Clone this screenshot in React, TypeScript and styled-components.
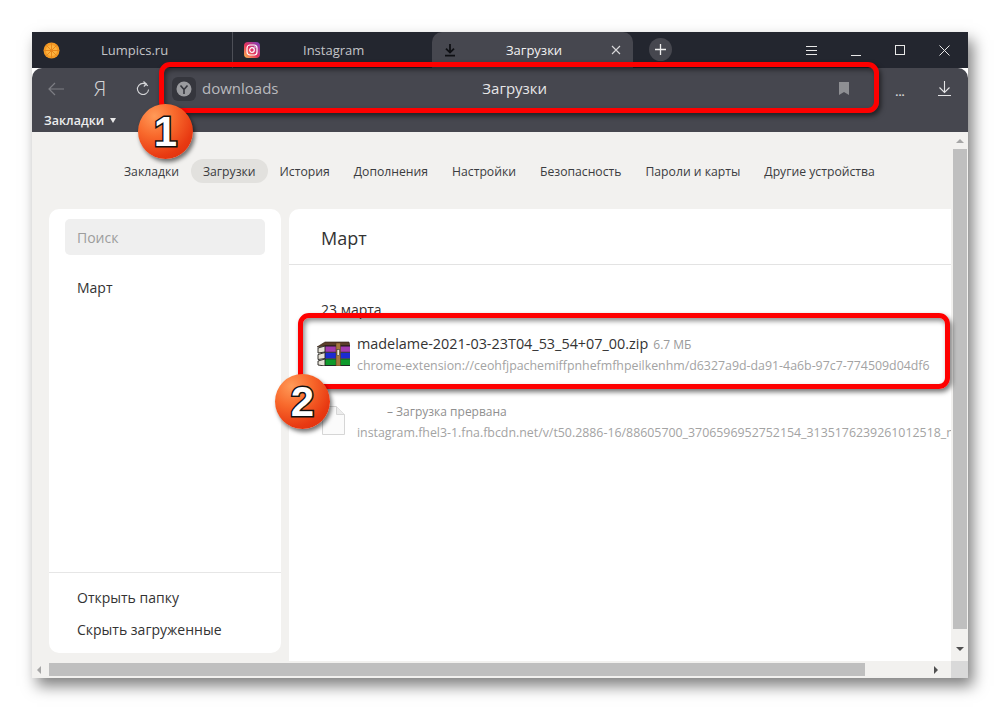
import React from "react";
import styled, {createGlobalStyle} from "styled-components";

const GlobalStyle = createGlobalStyle`
  html, body {
    margin: 0;
    background: #ffffff;
    font-family: "Open Sans", "Noto Sans CJK SC", sans-serif;
  }
`;

const Page = styled.div`
  width: 1000px;
  height: 710px;
  padding: 32px 0 0 32px;
  box-sizing: border-box;
  overflow: hidden;
`;

const Window = styled.div`
  position: relative;
  width: 936px;
  height: 646px;
  display: flex;
  flex-direction: column;
  box-shadow: 5px 8px 14px rgba(0, 0, 0, 0.5);
`;

const TabBar = styled.div`
  height: 36px;
  background: #23262f;
  display: flex;
  align-items: stretch;
  flex: none;
`;

const Tab = styled.div<{ $active?: boolean; $width: number; $divider?: boolean }>`
  width: ${(p) => p.$width}px;
  box-sizing: border-box;
  display: flex;
  align-items: center;
  padding-left: 11px;
  font-size: 13px;
  color: ${(p) => (p.$active ? "#f2f2f2" : "#c3c4c8")};
  background: ${(p) => (p.$active ? "#46474f" : "transparent")};
  border-radius: ${(p) => (p.$active ? "10px 10px 0 0" : "0")};
  border-right: ${(p) => (p.$divider ? "1px solid #4d4f57" : "none")};
`;

const TabTitle = styled.span<{ $left: number }>`
  margin-left: ${(p) => p.$left}px;
  flex: 1;
`;

const NewTab = styled.div`
  width: 23px;
  height: 23px;
  border-radius: 50%;
  background: #46474f;
  margin: 6px 0 0 16px;
  display: flex;
  align-items: center;
  justify-content: center;
`;

const WindowButtons = styled.div`
  margin-left: auto;
  display: flex;
  align-items: center;
  padding-right: 18px;
  gap: 34px;
`;

const Toolbar = styled.div`
  height: 64px;
  flex: none;
  background: #46474f;
  border-radius: 10px 10px 0 0;
  display: flex;
  flex-direction: column;
  z-index: 1;
`;

const NavRow = styled.div`
  height: 41px;
  display: flex;
  align-items: center;
  padding-left: 14px;
`;

const ToolIcon = styled.div<{ $width: number }>`
  width: ${(p) => p.$width}px;
  display: flex;
  justify-content: center;
  flex: none;
`;

const YaLetter = styled.span`
  font-family: "Open Sans", sans-serif;
  font-weight: 300;
  font-size: 21px;
  color: #d4d5d8;
  line-height: 1;
`;

const AddressBar = styled.div`
  flex: none;
  width: 711px;
  height: 36px;
  margin-left: 17px;
  display: flex;
  align-items: center;
  box-sizing: border-box;
  padding-left: 3px;
`;

const SiteBadge = styled.div`
  width: 24px;
  height: 24px;
  border-radius: 6px;
  background: #35363d;
  display: flex;
  align-items: center;
  justify-content: center;
`;

const AddressText = styled.span`
  font-size: 15px;
  color: #b9babe;
  margin: 0 0 2px 6px;
`;

const AddressTitle = styled.span`
  flex: 1;
  text-align: center;
  font-size: 15px;
  color: #e6e6e8;
  margin: 0 88px 2px 0;
`;

const BookmarkFlag = styled.div`
  margin-right: 31px;
  display: flex;
`;

const Dots = styled.span`
  color: #d6d6d8;
  font-size: 11px;
  font-weight: 700;
  line-height: 1;
  width: 40px;
  text-align: center;
  padding-top: 6px;
`;

const BookmarksRow = styled.div`
  height: 23px;
  box-sizing: border-box;
  padding: 4px 0 0 12px;
  display: flex;
  align-items: flex-start;
  gap: 6px;
  color: #ecedee;
  font-size: 12.5px;
  line-height: 16px;
  font-weight: 600;
`;

const Caret = styled.span`
  width: 0;
  height: 0;
  border-left: 3px solid transparent;
  border-right: 3px solid transparent;
  border-top: 5px solid #e8e8e8;
  margin-top: 5px;
`;

const Body = styled.div`
  flex: 1;
  min-height: 0;
  display: grid;
  grid-template-columns: 919px 17px;
  grid-template-rows: 529px 17px;
  background: #f2f1ef;
`;

const Content = styled.div`
  display: flex;
  flex-direction: column;
  overflow: hidden;
  min-width: 0;
`;

const SectionNav = styled.nav`
  height: 77px;
  flex: none;
  box-sizing: border-box;
  padding: 27px 0 0 80px;
  display: flex;
  align-items: flex-start;
`;

const SectionLink = styled.div<{ $active?: boolean }>`
  height: 24px;
  line-height: 26px;
  padding: 0 12px;
  font-size: 12.2px;
  color: #3b3c40;
  border-radius: 12px;
  background: ${(p) => (p.$active ? "#e2e1de" : "transparent")};
`;

const Columns = styled.div`
  flex: 1;
  display: flex;
  min-height: 0;
  padding-left: 17px;
  gap: 8px;
`;

const Sidebar = styled.aside`
  width: 232px;
  height: 444px;
  flex: none;
  background: #ffffff;
  border-radius: 10px;
  display: flex;
  flex-direction: column;
`;

const SearchBox = styled.div`
  margin: 10px 16px 0;
  height: 36px;
  line-height: 37px;
  background: #efefef;
  border-radius: 5px;
  padding-left: 12px;
  font-size: 14px;
  color: #9d9d9d;
`;

const SideMonth = styled.div`
  margin: 23px 0 0 28px;
  font-size: 14px;
  line-height: 20px;
  color: #333;
`;

const SideFooter = styled.div`
  margin-top: auto;
  border-top: 1px solid #e6e6e6;
  height: 81px;
  box-sizing: border-box;
  padding: 15px 0 0 28px;
  display: flex;
  flex-direction: column;
  gap: 12px;
  font-size: 14px;
  line-height: 20px;
  color: #333;
`;

const Main = styled.main`
  flex: 1;
  min-width: 0;
  background: #ffffff;
  border-radius: 10px 0 0 0;
  overflow: hidden;
`;

const MonthHeader = styled.div`
  height: 56px;
  box-sizing: border-box;
  border-bottom: 1px solid #e3e3e3;
  padding: 14px 0 0 32px;
  font-size: 18px;
  line-height: 30px;
  color: #333;
`;

const DateLabel = styled.div`
  margin: 35px 0 0 32px;
  height: 20px;
  font-size: 14px;
  line-height: 20px;
  color: #333;
`;

const DownloadRow = styled.div<{ $top: number }>`
  display: flex;
  margin: ${(p) => p.$top}px 0 0 28px;
  white-space: nowrap;
`;

const FileIcon = styled.div<{ $top: number; $left: number }>`
  width: ${(p) => 40 - p.$left}px;
  flex: none;
  padding: ${(p) => p.$top}px 0 0 ${(p) => p.$left}px;
`;

const FileInfo = styled.div`
  display: flex;
  flex-direction: column;
  gap: 1px;
`;

const FileName = styled.div`
  font-size: 14.4px;
  line-height: 20px;
  color: #333;
`;

const FileSize = styled.span`
  font-size: 12px;
  color: #9a9a9a;
  margin-left: 5px;
`;

const FileStatus = styled.div`
  font-size: 12px;
  line-height: 20px;
  color: #8f8f8f;
  padding-left: 30px;
`;

const FileUrl = styled.div`
  font-size: 12.37px;
  line-height: 20px;
  color: #a3a3a3;
`;

const VScroll = styled.div`
  display: flex;
  flex-direction: column;
  align-items: center;
`;

const VThumb = styled.div`
  width: 14px;
  height: 480px;
  background: #bfbfbf;
  margin: 6px 0 0 0;
`;

const HScroll = styled.div`
  display: flex;
  align-items: center;
`;

const HThumb = styled.div`
  width: 816px;
  height: 13px;
  background: #bfbfbf;
  margin-left: 8px;
`;

const Corner = styled.div`
  background: #d9d9d9;
`;

const Arrow = styled.span<{ $dir: "up" | "down" | "left" | "right"; $light?: boolean }>`
  width: 0;
  height: 0;
  flex: none;
  ${(p) => {
    const color = p.$light ? "#a6a6a6" : "#505050";
    if (p.$dir === "up") return `border-left:4px solid transparent;border-right:4px solid transparent;border-bottom:4px solid ${color};margin-top:7px;`;
    if (p.$dir === "down") return `border-left:4px solid transparent;border-right:4px solid transparent;border-top:4px solid ${color};margin-top:18px;`;
    if (p.$dir === "left") return `border-top:4px solid transparent;border-bottom:4px solid transparent;border-right:4px solid ${color};margin-left:5px;`;
    return `border-top:4px solid transparent;border-bottom:4px solid transparent;border-left:4px solid ${color};margin-left:69px;`;
  }}
`;

const HighlightFrame = styled.div<{ $x: number; $y: number; $w: number; $h: number }>`
  position: absolute;
  left: ${(p) => p.$x}px;
  top: ${(p) => p.$y}px;
  width: ${(p) => p.$w}px;
  height: ${(p) => p.$h}px;
  box-sizing: border-box;
  border: 5px solid #fe0000;
  border-radius: 11px;
  box-shadow: 2px 3px 5px rgba(0, 0, 0, 0.55), inset 2px 3px 5px rgba(0, 0, 0, 0.45);
  z-index: 5;
`;

const StepBadge = styled.div<{ $x: number; $y: number }>`
  position: absolute;
  left: ${(p) => p.$x}px;
  top: ${(p) => p.$y}px;
  width: 55px;
  height: 55px;
  border-radius: 50%;
  background: radial-gradient(circle at 30% 22%, #ff9a58 0%, #f8692c 35%, #e83a12 70%, #d92a0a 100%);
  box-shadow: 2px 3px 4px rgba(0, 0, 0, 0.55);
  display: flex;
  align-items: center;
  justify-content: center;
  font-family: "Liberation Sans", sans-serif;
  font-weight: 700;
  font-size: 42px;
  line-height: 1;
  color: #ffffff;
  -webkit-text-stroke: 3px #111;
  paint-order: stroke fill;
  z-index: 6;
`;

const tabs = ["Закладки", "Загрузки", "История", "Дополнения", "Настройки", "Безопасность", "Пароли и карты", "Другие устройства"];

const OrangeIcon = () => (
    <svg width="17" height="17" viewBox="0 0 17 17">
        <circle cx="8.5" cy="8.5" r="8" fill="#f49a24"/>
        <circle cx="8.5" cy="8.5" r="5.6" fill="#fbb23f"/>
        <path d="M8.5 1v15M1 8.5h15M3.2 3.2l10.6 10.6M13.8 3.2L3.2 13.8" stroke="#e8861a" strokeWidth="1"/>
    </svg>
);

const InstagramIcon = () => (
    <svg width="16" height="16" viewBox="0 0 16 16">
        <defs>
            <linearGradient id="ig" x1="0" y1="1" x2="1" y2="0">
                <stop offset="0" stopColor="#fdc04f"/>
                <stop offset="0.45" stopColor="#e8335c"/>
                <stop offset="1" stopColor="#7440c4"/>
            </linearGradient>
        </defs>
        <rect width="16" height="16" rx="4" fill="url(#ig)"/>
        <rect x="3" y="3" width="10" height="10" rx="3" fill="none" stroke="#fff" strokeWidth="1.2"/>
        <circle cx="8" cy="8" r="2.3" fill="none" stroke="#fff" strokeWidth="1.2"/>
        <circle cx="11" cy="5" r="0.7" fill="#fff"/>
    </svg>
);

const TabDownloadIcon = () => (
    <svg width="14" height="14" viewBox="0 0 14 14" fill="none" stroke="#0f1014" strokeWidth="1.8">
        <path d="M7 1v8M3 5.6L7 9.6l4-4M2 12.7h10"/>
    </svg>
);

const WinRarIcon = () => (
    <svg width="33" height="25" viewBox="0 0 33 25">
        <path d="M0 6L8 1h24l1 4H8z" fill="#5c3f2b" stroke="#2a1c12" strokeWidth="0.6"/>
        <path d="M8 5h25v6H8z" fill="#a23bb0"/>
        <path d="M8 11.5h25v6H8z" fill="#1b2bd2"/>
        <path d="M8 18h25v6.5H8z" fill="#0f9a2c"/>
        <path d="M8 5L1 7v5l7-1zM8 11.5L1 13.5v5l7-1zM8 18L1 20v4l7 1z" fill="#e6e2d8" stroke="#23201c" strokeWidth="0.9"/>
        <path d="M8 5h25M8 11.3h25M8 17.8h25M8 24.5h25" stroke="#15151a" strokeWidth="0.9"/>
        <rect x="19" y="2" width="4.5" height="23" fill="#a5773f" stroke="#4a3218" strokeWidth="0.5"/>
        <rect x="20" y="8.5" width="2.5" height="6" fill="#efe8d2" stroke="#222" strokeWidth="0.5"/>
    </svg>
);

const BlankFileIcon = () => (
    <svg width="23" height="29" viewBox="0 0 23 29">
        <path d="M0.5 0.5h14l8 8v20h-22z" fill="#fbfbfb" stroke="#d6d6d6"/>
        <path d="M14.5 0.5v8h8" fill="#ececec" stroke="#d6d6d6"/>
    </svg>
);

export default function App() {
    return (
        <React.Fragment>
            <GlobalStyle/>
            <Page>
                <Window>
                    <TabBar>
                        <Tab $width={201} $divider>
                            <OrangeIcon/>
                            <TabTitle $left={41}>Lumpics.ru</TabTitle>
                        </Tab>
                        <Tab $width={199}>
                            <InstagramIcon/>
                            <TabTitle $left={43}>Instagram</TabTitle>
                        </Tab>
                        <Tab $width={201} $active>
                            <TabDownloadIcon/>
                            <TabTitle $left={49}>Загрузки</TabTitle>
                            <svg width="12" height="12" viewBox="0 0 12 12" stroke="#d8d8da" strokeWidth="1.1" style={{marginRight: 11}}>
                                <path d="M2 2l8 8M10 2l-8 8"/>
                            </svg>
                        </Tab>
                        <NewTab>
                            <svg width="13" height="13" viewBox="0 0 13 13" stroke="#eeeeee" strokeWidth="1.3">
                                <path d="M6.5 1v11M1 6.5h11"/>
                            </svg>
                        </NewTab>
                        <WindowButtons>
                            <svg width="11" height="11" viewBox="0 0 11 11" stroke="#e8e8e8" strokeWidth="1">
                                <path d="M0 1.5h11M0 5.5h11M0 9.5h11"/>
                            </svg>
                            <svg width="10" height="11" viewBox="0 0 10 11" stroke="#e8e8e8" strokeWidth="1">
                                <path d="M0 10.5h10"/>
                            </svg>
                            <svg width="10" height="10" viewBox="0 0 10 10" fill="none" stroke="#e8e8e8" strokeWidth="1">
                                <rect x="0.5" y="0.5" width="9" height="9"/>
                            </svg>
                            <svg width="11" height="11" viewBox="0 0 11 11" stroke="#e8e8e8" strokeWidth="1">
                                <path d="M0.5 0.5l10 10M10.5 0.5l-10 10"/>
                            </svg>
                        </WindowButtons>
                    </TabBar>
                    <Toolbar>
                        <NavRow>
                            <ToolIcon $width={20}>
                                <svg width="16" height="14" viewBox="0 0 16 14" fill="none" stroke="#7d7e84" strokeWidth="1.2">
                                    <path d="M16 7H1M7 1L1 7l6 6"/>
                                </svg>
                            </ToolIcon>
                            <ToolIcon $width={68}>
                                <YaLetter>Я</YaLetter>
                            </ToolIcon>
                            <ToolIcon $width={18}>
                                <svg width="14" height="15" viewBox="0 0 14 15" fill="none" stroke="#d4d5d8" strokeWidth="1.1">
                                    <path d="M11.8 5A5.6 5.6 0 1 0 12.6 8.5M7.5 0.5L10.5 3 7.8 5.5"/>
                                </svg>
                            </ToolIcon>
                            <AddressBar>
                                <SiteBadge>
                                    <svg width="16" height="16" viewBox="0 0 16 16">
                                        <circle cx="8" cy="8" r="7.5" fill="#9a9b9f"/>
                                        <path d="M4.5 4.5L8 8.5l3.5-4M8 8.5V13" fill="none" stroke="#35363d" strokeWidth="1.6"/>
                                    </svg>
                                </SiteBadge>
                                <AddressText>downloads</AddressText>
                                <AddressTitle>Загрузки</AddressTitle>
                                <BookmarkFlag>
                                    <svg width="10" height="13" viewBox="0 0 10 13">
                                        <path d="M0 0h10v13L5 10 0 13z" fill="#8e8f93"/>
                                    </svg>
                                </BookmarkFlag>
                            </AddressBar>
                            <Dots>...</Dots>
                            <ToolIcon $width={48}>
                                <svg width="13" height="15" viewBox="0 0 13 15" fill="none" stroke="#e4e4e6" strokeWidth="1.1">
                                    <path d="M6.5 0v11M1.5 6.5l5 5 5-5M0 14.5h13"/>
                                </svg>
                            </ToolIcon>
                        </NavRow>
                        <BookmarksRow>
                            Закладки
                            <Caret/>
                        </BookmarksRow>
                    </Toolbar>
                    <Body>
                        <Content>
                            <SectionNav>
                                {tabs.map((t) => (
                                    <SectionLink key={t} $active={t === "Загрузки"}>{t}</SectionLink>
                                ))}
                            </SectionNav>
                            <Columns>
                                <Sidebar>
                                    <SearchBox>Поиск</SearchBox>
                                    <SideMonth>Март</SideMonth>
                                    <SideFooter>
                                        <div>Открыть папку</div>
                                        <div>Скрыть загруженные</div>
                                    </SideFooter>
                                </Sidebar>
                                <Main>
                                    <MonthHeader>Март</MonthHeader>
                                    <DateLabel>23 марта</DateLabel>
                                    <DownloadRow $top={14}>
                                        <FileIcon $top={7} $left={0}><WinRarIcon/></FileIcon>
                                        <FileInfo>
                                            <FileName>
                                                madelame-2021-03-23T04_53_54+07_00.zip
                                                <FileSize>6.7 МБ</FileSize>
                                            </FileName>
                                            <FileUrl>chrome-extension://ceohfjpachemiffpnhefmfhpeilkenhm/d6327a9d-da91-4a6b-97c7-774509d04df6</FileUrl>
                                        </FileInfo>
                                    </DownloadRow>
                                    <DownloadRow $top={26}>
                                        <FileIcon $top={4} $left={5}><BlankFileIcon/></FileIcon>
                                        <FileInfo>
                                            <FileStatus>– Загрузка прервана</FileStatus>
                                            <FileUrl>instagram.fhel3-1.fna.fbcdn.net/v/t50.2886-16/88605700_3706596952752154_3135176239261012518_n.mp4</FileUrl>
                                        </FileInfo>
                                    </DownloadRow>
                                </Main>
                            </Columns>
                        </Content>
                        <VScroll>
                            <Arrow $dir="up" $light/>
                            <VThumb/>
                            <Arrow $dir="down"/>
                        </VScroll>
                        <HScroll>
                            <Arrow $dir="left" $light/>
                            <HThumb/>
                            <Arrow $dir="right"/>
                        </HScroll>
                        <Corner/>
                    </Body>
                    <HighlightFrame $x={127} $y={30} $w={720} $h={51}/>
                    <HighlightFrame $x={266} $y={281} $w={652} $h={76}/>
                    <StepBadge $x={106} $y={72}>1</StepBadge>
                    <StepBadge $x={243} $y={342}>2</StepBadge>
                </Window>
            </Page>
        </React.Fragment>
    );
}
